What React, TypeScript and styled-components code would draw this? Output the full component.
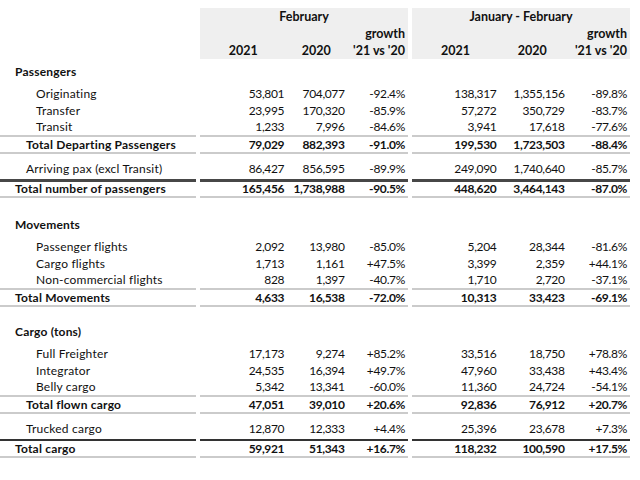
import React from 'react'
import styled, { createGlobalStyle } from 'styled-components'

type Rule = 'none' | 'light' | 'dark' | 'darkThin'

interface DataRow {
  label: string
  indent: 0 | 1 | 2
  height: number
  bold?: boolean
  spaced?: boolean
  rule?: Rule
  feb: [string, string, string]
  ytd: [string, string, string]
}

interface Section {
  title: string
  top: number
  rows: DataRow[]
}

const sections: Section[] = [
  {
    title: 'Passengers',
    top: 4,
    rows: [
      { label: 'Originating', indent: 2, height: 17, feb: ['53,801', '704,077', '-92.4%'], ytd: ['138,317', '1,355,156', '-89.8%'] },
      { label: 'Transfer', indent: 2, height: 17, feb: ['23,995', '170,320', '-85.9%'], ytd: ['57,272', '350,729', '-83.7%'] },
      { label: 'Transit', indent: 2, height: 18, rule: 'light', feb: ['1,233', '7,996', '-84.6%'], ytd: ['3,941', '17,618', '-77.6%'] },
      { label: 'Total Departing Passengers', indent: 1, height: 17, bold: true, rule: 'light', feb: ['79,029', '882,393', '-91.0%'], ytd: ['199,530', '1,723,503', '-88.4%'] },
      { label: 'Arriving pax (excl Transit)', indent: 1, height: 28, spaced: true, rule: 'dark', feb: ['86,427', '856,595', '-89.9%'], ytd: ['249,090', '1,740,640', '-85.7%'] },
      { label: 'Total number of passengers', indent: 0, height: 16, bold: true, rule: 'light', feb: ['165,456', '1,738,988', '-90.5%'], ytd: ['448,620', '3,464,143', '-87.0%'] }
    ]
  },
  {
    title: 'Movements',
    top: 18,
    rows: [
      { label: 'Passenger flights', indent: 2, height: 17, feb: ['2,092', '13,980', '-85.0%'], ytd: ['5,204', '28,344', '-81.6%'] },
      { label: 'Cargo flights', indent: 2, height: 17, feb: ['1,713', '1,161', '+47.5%'], ytd: ['3,399', '2,359', '+44.1%'] },
      { label: 'Non-commercial flights', indent: 2, height: 18, rule: 'light', feb: ['828', '1,397', '-40.7%'], ytd: ['1,710', '2,720', '-37.1%'] },
      { label: 'Total Movements', indent: 0, height: 17, bold: true, rule: 'light', feb: ['4,633', '16,538', '-72.0%'], ytd: ['10,313', '33,423', '-69.1%'] }
    ]
  },
  {
    title: 'Cargo (tons)',
    top: 16,
    rows: [
      { label: 'Full Freighter', indent: 2, height: 17, feb: ['17,173', '9,274', '+85.2%'], ytd: ['33,516', '18,750', '+78.8%'] },
      { label: 'Integrator', indent: 2, height: 17, feb: ['24,535', '16,394', '+49.7%'], ytd: ['47,960', '33,438', '+43.4%'] },
      { label: 'Belly cargo', indent: 2, height: 18, rule: 'light', feb: ['5,342', '13,341', '-60.0%'], ytd: ['11,360', '24,724', '-54.1%'] },
      { label: 'Total flown cargo', indent: 1, height: 17, bold: true, rule: 'light', feb: ['47,051', '39,010', '+20.6%'], ytd: ['92,836', '76,912', '+20.7%'] },
      { label: 'Trucked cargo', indent: 1, height: 27, spaced: true, rule: 'darkThin', feb: ['12,870', '12,333', '+4.4%'], ytd: ['25,396', '23,678', '+7.3%'] },
      { label: 'Total cargo', indent: 0, height: 17, bold: true, rule: 'light', feb: ['59,921', '51,343', '+16.7%'], ytd: ['118,232', '100,590', '+17.5%'] }
    ]
  }
]

const febCols = [88, 60, 60]
const ytdCols = [88, 68, 62]

const ruleWidth: Record<Rule, number> = { none: 0, light: 2, dark: 3, darkThin: 2 }
const ruleColor: Record<Rule, string> = {
  none: 'transparent',
  light: '#cbcbcb',
  dark: '#474747',
  darkThin: '#333333'
}

const indents = [15, 26, 36]

const GlobalStyle = createGlobalStyle`
  body {
    margin: 0;
    background: #ffffff;
    color: #111111;
    font-family: "Lato", "Liberation Sans", sans-serif;
    font-size: 12px;
  }
`

const Table = styled.div`
  display: flex;
  flex-direction: column;
  padding-top: 8px;
  width: 630px;
`

const HeadRow = styled.div`
  display: flex;
  gap: 4px;
`

const Spacer = styled.div`
  width: 196px;
`

const HeadGroup = styled.div<{ $width: number }>`
  background: #efefef;
  display: flex;
  flex-direction: column;
  font-size: 12.5px;
  font-weight: 700;
  height: 51px;
  width: ${(p) => p.$width}px;
`

const HeadTitle = styled.div`
  height: 17px;
  line-height: 17px;
  text-align: center;
`

const HeadLine = styled.div`
  display: flex;
  height: 17px;
  line-height: 17px;
`

const HeadCell = styled.div<{ $width: number; $align: 'center' | 'right' }>`
  padding-right: ${(p) => (p.$align === 'right' ? 3 : 0)}px;
  text-align: ${(p) => p.$align};
  width: ${(p) => p.$width}px;
`

const SectionTitle = styled.div<{ $top: number }>`
  font-weight: 700;
  letter-spacing: 0.2px;
  line-height: 17px;
  padding: ${(p) => p.$top}px 0 5px 15px;
`

const Row = styled.div<{ $rule: Rule; $spaced: boolean; $bold: boolean; $height: number }>`
  display: flex;
  font-weight: ${(p) => (p.$bold ? 700 : 400)};
  gap: 4px;

  & > * {
    border-bottom: ${(p) => ruleWidth[p.$rule]}px solid ${(p) => ruleColor[p.$rule]};
    box-sizing: border-box;
    height: ${(p) => p.$height}px;
    line-height: ${(p) => (p.$spaced ? 17 : p.$height - ruleWidth[p.$rule])}px;
    padding-top: ${(p) => (p.$spaced ? 6 : 0)}px;
  }
`

const Label = styled.div<{ $indent: number }>`
  letter-spacing: 0.2px;
  padding-left: ${(p) => p.$indent}px;
  white-space: nowrap;
  width: 196px;
`

const Group = styled.div<{ $width: number }>`
  display: flex;
  width: ${(p) => p.$width}px;
`

const Num = styled.div<{ $width: number }>`
  letter-spacing: -0.35px;
  padding-right: 3px;
  text-align: right;
  white-space: nowrap;
  width: ${(p) => p.$width}px;
`

const Head = ({ title, cols }: { title: string; cols: number[] }) => (
  <HeadGroup $width={cols.reduce((a, b) => a + b, 0)}>
    <HeadTitle>{title}</HeadTitle>
    <HeadLine>
      <HeadCell $width={cols[0]} $align="center" />
      <HeadCell $width={cols[1]} $align="center" />
      <HeadCell $width={cols[2]} $align="right">growth</HeadCell>
    </HeadLine>
    <HeadLine>
      <HeadCell $width={cols[0]} $align="center">2021</HeadCell>
      <HeadCell $width={cols[1]} $align="center">2020</HeadCell>
      <HeadCell $width={cols[2]} $align="right">'21 vs '20</HeadCell>
    </HeadLine>
  </HeadGroup>
)

const Values = ({ values, cols }: { values: string[]; cols: number[] }) => (
  <Group $width={cols.reduce((a, b) => a + b, 0)}>
    {values.map((v, i) => (
      <Num key={i} $width={cols[i]}>
        {v}
      </Num>
    ))}
  </Group>
)

export default function App() {
  return (
    <>
      <GlobalStyle />
      <Table>
        <HeadRow>
          <Spacer />
          <Head title="February" cols={febCols} />
          <Head title="January - February" cols={ytdCols} />
        </HeadRow>

        {sections.map((section) => (
          <React.Fragment key={section.title}>
            <SectionTitle $top={section.top}>{section.title}</SectionTitle>
            {section.rows.map((row) => (
              <Row
                key={row.label}
                $rule={row.rule ?? 'none'}
                $spaced={!!row.spaced}
                $bold={!!row.bold}
                $height={row.height}
              >
                <Label $indent={indents[row.indent]}>{row.label}</Label>
                <Values values={row.feb} cols={febCols} />
                <Values values={row.ytd} cols={ytdCols} />
              </Row>
            ))}
          </React.Fragment>
        ))}
      </Table>
    </>
  )
}
